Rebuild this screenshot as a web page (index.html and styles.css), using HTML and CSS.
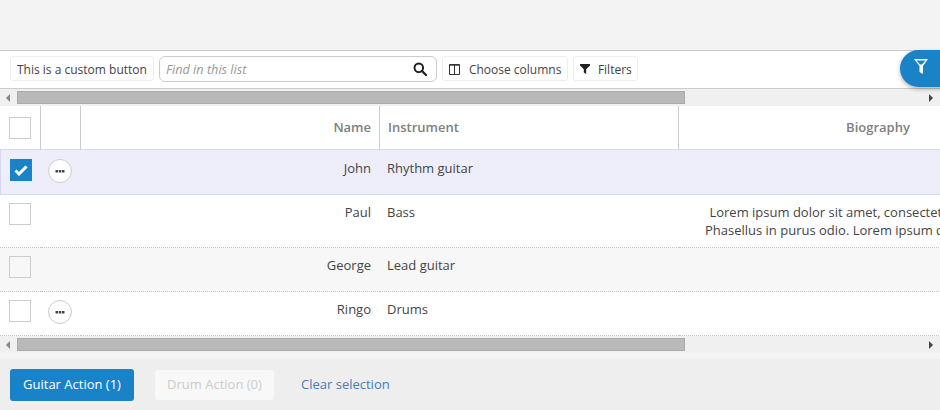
FILE: index.html
```html
<!DOCTYPE html>
<html lang="en">
<head>
    <meta charset="UTF-8">
    <meta name="viewport" content="width=device-width, initial-scale=1.0">
    <title>Band list</title>
    <link rel="stylesheet" href="styles.css">
</head>
<body>
    <div class="top-space"></div>

    <div class="toolbar">
        <button class="tool-btn">This is a custom button</button>
        <div class="search">
            <span class="search-text">Find in this list</span>
            <svg class="search-icon" width="14" height="14" viewBox="0 0 14 14">
                <circle cx="5.8" cy="5.8" r="4.3" fill="none" stroke="#1c1c1c" stroke-width="1.9"/>
                <path d="M9 9l4 4" stroke="#1c1c1c" stroke-width="2.2" stroke-linecap="round"/>
            </svg>
        </div>
        <button class="tool-btn columns-btn">
            <svg width="11" height="11" viewBox="0 0 11 11">
                <path d="M.5.5h10v10H.5zM5.500 .5v10" fill="none" stroke="#333" stroke-width="1"/>
                <path d="M.5 1.200h10" fill="none" stroke="#333" stroke-width="1"/>
            </svg>
            Choose columns
        </button>
        <button class="tool-btn filters-btn">
            <svg width="10" height="10" viewBox="0 0 10 10">
                <path d="M0 0h10v1.400L6.200 5.200V10L3.800 8.400V5.200L0 1.400z" fill="#222"/>
            </svg>
            Filters
        </button>
        <button class="filter-fab">
            <svg width="16" height="17" viewBox="0 0 16 17">
                <path d="M1 1h14L10 8v8L6.500 14V8z M3.500 2.500L7 6.500h2L12.500 2.500z" fill="#fff" fill-rule="evenodd"/>
            </svg>
        </button>
    </div>

    <div class="scrollbar">
        <span class="arrow arrow-left"></span>
        <span class="thumb"></span>
        <span class="arrow arrow-right"></span>
    </div>

    <div class="table-wrap">
        <table class="grid">
            <thead>
                <tr>
                    <th class="col-check"><span class="check"></span></th>
                    <th class="col-menu"></th>
                    <th class="col-name">Name</th>
                    <th class="col-instrument">Instrument</th>
                    <th class="col-bio">Biography</th>
                </tr>
            </thead>
            <tbody>
                <tr class="row-selected">
                    <td class="cell-check"><span class="check checked">
                        <svg width="14" height="11" viewBox="0 0 14 11">
                            <path d="M1.500 5.500L5 9l7.500-7.500" fill="none" stroke="#fff" stroke-width="3"/>
                        </svg>
                    </span></td>
                    <td class="cell-menu"><button class="dots">
                        <svg width="10" height="4" viewBox="0 0 10 4">
                            <path d="M.5 1h2.500v2.500H.5zM3.800 1h2.500v2.500H3.800zM7 1h2.500v2.500H7z" fill="#444"/>
                        </svg>
                    </button></td>
                    <td class="cell-name">John</td>
                    <td class="cell-text">Rhythm guitar</td>
                    <td></td>
                </tr>
                <tr class="row-tall">
                    <td class="cell-check"><span class="check"></span></td>
                    <td class="cell-menu"></td>
                    <td class="cell-name">Paul</td>
                    <td class="cell-text">Bass</td>
                    <td class="cell-bio">Lorem ipsum dolor sit amet, consectetur adipiscing elit.<br>Phasellus in purus odio. Lorem ipsum dolor sit amet, elit.</td>
                </tr>
                <tr class="row-alt">
                    <td class="cell-check"><span class="check"></span></td>
                    <td class="cell-menu"></td>
                    <td class="cell-name">George</td>
                    <td class="cell-text">Lead guitar</td>
                    <td></td>
                </tr>
                <tr>
                    <td class="cell-check"><span class="check"></span></td>
                    <td class="cell-menu"><button class="dots">
                        <svg width="10" height="4" viewBox="0 0 10 4">
                            <path d="M.5 1h2.500v2.500H.5zM3.800 1h2.500v2.500H3.800zM7 1h2.500v2.500H7z" fill="#444"/>
                        </svg>
                    </button></td>
                    <td class="cell-name">Ringo</td>
                    <td class="cell-text">Drums</td>
                    <td></td>
                </tr>
            </tbody>
        </table>
    </div>

    <div class="scrollbar">
        <span class="arrow arrow-left"></span>
        <span class="thumb"></span>
        <span class="arrow arrow-right"></span>
    </div>

    <div class="actions">
        <button class="action-btn">Guitar Action (1)</button>
        <button class="action-btn action-disabled">Drum Action (0)</button>
        <a class="clear-link" href="#">Clear selection</a>
    </div>
</body>
</html>
```

FILE: styles.css
```css
* {
    box-sizing: border-box;
}
body {
    margin: 0;
    height: 410px;
    overflow: hidden;
    background-color: #f4f4f4;
    color: #444;
    font-family: 'Open Sans', sans-serif;
    font-size: 13px;
}
button {
    font-family: inherit;
    font-size: inherit;
}
.top-space {
    height: 50px;
    background-color: #f3f3f3;
}

/* toolbar */
.toolbar {
    display: flex;
    align-items: flex-start;
    gap: 5px;
    height: 39px;
    padding: 5px 0 0 10px;
    background-color: #fff;
    border-top: 1px solid #ccc;
    border-bottom: 1px solid #ccc;
    position: relative;
}
.tool-btn {
    display: flex;
    align-items: center;
    flex: none;
    height: 25px;
    padding: 1px 6px 0;
    background-color: #fff;
    border: 1px solid #eee;
    border-radius: 3px;
    color: #444;
    font-size: 12px;
    white-space: nowrap;
}
.tool-btn svg {
    flex: none;
}
.columns-btn {
    gap: 9px;
    width: 126px;
    padding-left: 6px;
}
.filters-btn {
    gap: 8px;
    width: 65px;
}
.search {
    display: flex;
    align-items: center;
    justify-content: space-between;
    flex: none;
    width: 278px;
    height: 26px;
    padding: 0 9px 0 6px;
    border: 1px solid #ccc;
    border-radius: 6px;
}
.search-text {
    color: #999;
    font-size: 12.7px;
    font-style: italic;
}
.filter-fab {
    position: absolute;
    top: -1px;
    left: 900px;
    width: 60px;
    height: 37px;
    padding: 0 0 0 13px;
    text-align: left;
    background-color: #1a82c7;
    border: none;
    border-radius: 19px;
    box-shadow: 0 2px 4px rgba(0, 0, 0, 0.3);
}

/* scrollbars */
.scrollbar {
    display: flex;
    align-items: center;
    height: 17px;
    background-color: #f0f0f0;
    overflow: hidden;
}
.thumb {
    width: 668px;
    height: 13px;
    margin-left: 11px;
    background-color: #b9b9b9;
    border: 1px solid #aaa;
}
.arrow {
    width: 0;
    height: 0;
    border-top: 4px solid transparent;
    border-bottom: 4px solid transparent;
}
.arrow-left {
    margin-left: 6px;
    border-right: 4px solid #888;
    margin-right: -4px;
    width: 4px;
}
.arrow-right {
    margin-left: 244px;
    border-left: 4px solid #444;
}

/* table */
.table-wrap {
    width: 940px;
    overflow: hidden;
    background-color: #fff;
}
.grid {
    width: 1075px;
    table-layout: fixed;
    border-collapse: separate;
    border-spacing: 0;
}
.grid th {
    height: 44px;
    padding: 0 8px 2px;
    color: #808080;
    font-weight: 600;
    border-right: 1px solid #ccc;
    border-bottom: 1px solid #d8d8ee;
}
.grid td {
    height: 44px;
    padding: 8px 8px 0;
    border-bottom: 1px dotted #c4c4c4;
    color: #444;
    vertical-align: top;
}
.grid th.col-check {
    padding: 0 0 0 9px;
}
.grid .cell-check {
    padding-left: 9px;
    padding-right: 0;
}
.grid .cell-menu {
    padding-left: 7px;
    padding-right: 0;
}
.col-check {
    width: 41px;
}
.col-menu {
    width: 40px;
}
.col-name {
    width: 299px;
    text-align: right;
}
.col-instrument {
    width: 299px;
    text-align: left;
}
.col-bio {
    width: 396px;
    text-align: center;
}
.grid .col-bio {
    padding-left: 10px;
    border-right: none;
}
.grid .cell-name {
    padding-right: 9px;
    text-align: right;
}
.grid .cell-text {
    padding-left: 7px;
}
.cell-bio {
    text-align: center;
    line-height: 18px;
    white-space: nowrap;
}
.row-selected td {
    height: 45px;
    padding-top: 9px;
    background-color: #eeeefb;
    border-bottom: 1px solid #d8d8f4;
}
.row-selected td:first-child {
    border-left: 1px solid #d8d8f4;
}
.row-tall td {
    height: 53px;
}
.row-alt td {
    background-color: #f7f7f7;
}
.check {
    display: flex;
    align-items: center;
    justify-content: center;
    width: 22px;
    height: 22px;
    border: 1px solid #ccc;
}
.checked {
    background-color: #1a82c7;
    border-color: #1a82c7;
}
.dots {
    display: flex;
    align-items: center;
    justify-content: center;
    width: 24px;
    height: 24px;
    padding: 0;
    background-color: #fff;
    border: 1px solid #ccc;
    border-radius: 50%;
}

/* bottom actions */
.actions {
    display: flex;
    align-items: center;
    height: 52px;
    margin-top: 6px;
    padding: 0 0 0 10px;
    background-color: #eee;
}
.action-btn {
    width: 124px;
    height: 32px;
    padding: 0 0 2px;
    background-color: #1a82c7;
    border: none;
    border-radius: 3px;
    color: #fff;
}
.action-disabled {
    width: 119px;
    height: 30px;
    margin-left: 21px;
    background-color: #f8f8f8;
    color: #ccc;
}
.clear-link {
    margin-left: 27px;
    margin-top: -2px;
    color: #3f7cc4;
    text-decoration: none;
}
```
